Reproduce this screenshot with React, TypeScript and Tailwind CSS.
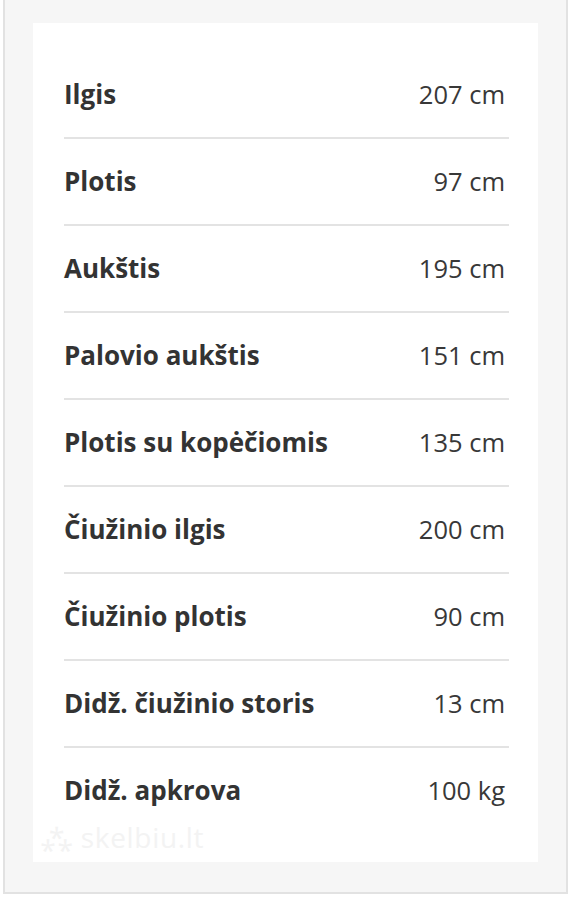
const specs: [string, string][] = [
  ['Ilgis', '207 cm'],
  ['Plotis', '97 cm'],
  ['Aukštis', '195 cm'],
  ['Palovio aukštis', '151 cm'],
  ['Plotis su kopėčiomis', '135 cm'],
  ['Čiužinio ilgis', '200 cm'],
  ['Čiužinio plotis', '90 cm'],
  ['Didž. čiužinio storis', '13 cm'],
  ['Didž. apkrova', '100 kg'],
]

export default function App() {
  return (
    <div className="h-[900px] w-[573px] bg-white font-['Open_Sans',sans-serif]">
      <div className="ml-[3px] h-[894px] w-[565px] border-x-2 border-b-2 border-[#e2e2e2] bg-[#f6f6f6] px-[28px] pt-[23px]">
        <div className="relative h-[839px] bg-white pl-[31px] pr-[29px] pt-[29px]">
          {specs.map(([label, value], i) => (
            <div
              key={label}
              className={`flex h-[85px] items-center justify-between ${i < specs.length - 1 ? 'border-b-2 border-[#e3e3e3] h-[87px]' : ''}`}
            >
              <span className="text-[26px] font-bold text-[#333]">{label}</span>
              <span className="pr-[4px] text-[25.5px] text-[#383838]">{value}</span>
            </div>
          ))}
          <div className="absolute bottom-[4px] left-[8px] text-[28px] tracking-wide text-[#f3f3f3]">
            ⁂ skelbiu.lt
          </div>
        </div>
      </div>
    </div>
  )
}
